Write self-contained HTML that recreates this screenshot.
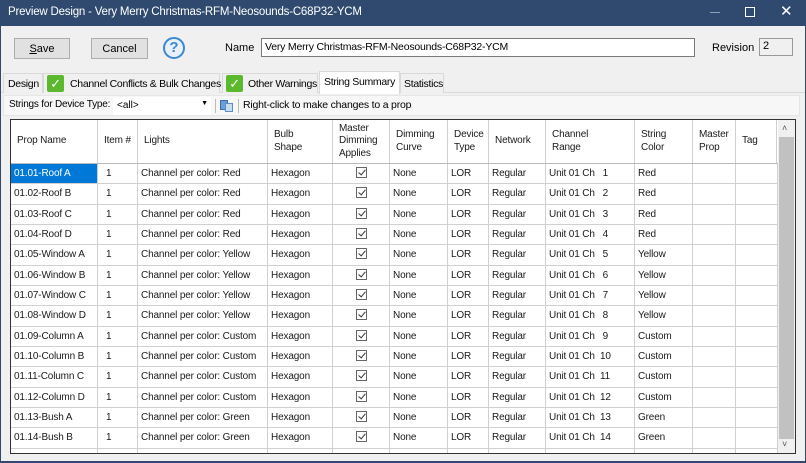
<!DOCTYPE html>
<html><head><meta charset="utf-8"><style>
*{box-sizing:border-box;margin:0;padding:0}
body{width:806px;height:463px;overflow:hidden;background:#2f4a6e;font-family:"Liberation Sans",sans-serif;font-size:11px;color:#000;position:relative}
.a{position:absolute;white-space:nowrap}
#win{left:1px;top:26px;width:804px;height:435px;background:#f0f0f0}
.btn{background:#e1e1e1;border:1px solid #adadad;text-align:center;line-height:20px;font-size:11px}
.tab{top:73px;height:20px;line-height:20px;font-size:10.5px;letter-spacing:-0.3px;padding-left:4px;border:1px solid #d9d9d9;border-bottom:none;background:#f0f0f0}
.chk{width:17px;height:17px;background:#5cb82c;border-radius:2px;color:#fff;font-size:13px;text-align:center;line-height:17px}
#grid{left:10px;top:119px;width:786px;height:335px;background:#fff;border:1px solid #333;overflow:hidden}
.row{position:absolute;left:0;height:21px;width:767px;border-bottom:1px solid #d0d0d0}
.c{position:absolute;top:0;height:100%;border-right:1px solid #d0d0d0;line-height:20px;padding-left:3px;white-space:nowrap;overflow:hidden;font-size:10px;letter-spacing:-0.15px;color:#1a1a1a}
.h .c{line-height:12.5px;display:flex;align-items:center;padding-left:6px;font-size:10px}
.cb{display:inline-block;width:11px;height:11px;border:1px solid #666;margin-left:20px;vertical-align:middle;position:relative;top:-1px}
.cb:after{content:"";position:absolute;left:3px;top:0;width:3px;height:6px;border:solid #333;border-width:0 1px 1px 0;transform:rotate(40deg)}
</style></head><body>
<div class="a" style="left:8px;top:6px;color:#fff;font-size:11.5px;letter-spacing:-0.2px">Preview Design - Very Merry Christmas-RFM-Neosounds-C68P32-YCM</div>
<div class="a" style="left:710px;top:12px;width:10px;height:1px;background:#8fa0b8"></div>
<div class="a" style="left:745px;top:7px;width:10px;height:10px;border:1px solid #fff"></div>
<div class="a" style="left:780px;top:2px;color:#fff;font-size:15px">✕</div>
<div class="a" id="win"></div>
<div class="a btn" style="left:14px;top:38px;width:56px;height:21px"><u>S</u>ave</div>
<div class="a btn" style="left:91px;top:38px;width:57px;height:21px">Cancel</div>
<div class="a" style="left:163px;top:37px;width:22px;height:22px;border:2px solid #3d88d0;border-radius:50%;background:#e8f1fb;color:#3d88d0;text-align:center;font-size:15px;font-weight:bold;line-height:18px">?</div>
<div class="a" style="left:225px;top:42px;font-size:11px">Name</div>
<div class="a" style="left:261px;top:38px;width:434px;height:19px;background:#fff;border:1px solid #7a7a7a;padding:2px 3px;font-size:10.5px;letter-spacing:-0.2px">Very Merry Christmas-RFM-Neosounds-C68P32-YCM</div>
<div class="a" style="left:712px;top:42px;font-size:11px">Revision</div>
<div class="a" style="left:759px;top:38px;width:34px;height:18px;background:#f0f0f0;border:1px solid #999;padding:1px 3px">2</div>
<div class="a" style="left:1px;top:92px;width:804px;height:1px;background:#d9d9d9"></div>
<div class="a tab" style="left:3px;width:40px">Design</div>
<div class="a tab" style="left:43px;width:177px;padding-left:3px"><span class="a chk" style="left:3px;top:1px">✓</span><span style="margin-left:23px">Channel Conflicts &amp; Bulk Changes</span></div>
<div class="a tab" style="left:222px;width:96px;padding-left:3px"><span class="a chk" style="left:3px;top:1px">✓</span><span style="margin-left:22px">Other Warnings</span></div>
<div class="a tab" style="left:319px;top:71px;height:23px;width:81px;background:#fff;line-height:21px">String Summary</div>
<div class="a tab" style="left:400px;width:44px;padding-left:3px">Statistics</div>
<div class="a" style="left:3px;top:95px;width:797px;height:21px;background:#f7f7f7;border:1px solid #e6e6e6"></div>
<div class="a" style="left:9px;top:99px;font-size:10px;letter-spacing:-0.2px">Strings for Device Type:</div>
<div class="a" style="left:113px;top:97px;width:98px;height:18px;background:#fff;padding:3px 4px;font-size:10px">&lt;all&gt;<span class="a" style="right:3px;top:3px;font-size:7px">▼</span></div>
<div class="a" style="left:215px;top:99px;width:1px;height:14px;background:#bbb"></div>
<div class="a" style="left:220px;top:100px;width:8px;height:10px;background:#6b9fd6;border:1px solid #3b6ea8"></div>
<div class="a" style="left:225px;top:103px;width:8px;height:9px;background:#c8dcf0;border:1px solid #5b8ec8"></div>
<div class="a" style="left:238px;top:99px;width:1px;height:14px;background:#bbb"></div>
<div class="a" style="left:243px;top:99px;font-size:10.5px;letter-spacing:-0.2px">Right-click to make changes to a prop</div>
<div class="a" id="grid">
<div class="row h" style="top:0;height:44px;border-bottom:1px solid #bbb">
<div class="c" style="left:0;width:87px">Prop Name</div>
<div class="c" style="left:87px;width:40px">Item #</div>
<div class="c" style="left:127px;width:130px">Lights</div>
<div class="c" style="left:257px;width:65px">Bulb<br>Shape</div>
<div class="c" style="left:322px;width:57px">Master<br>Dimming<br>Applies</div>
<div class="c" style="left:379px;width:58px">Dimming<br>Curve</div>
<div class="c" style="left:437px;width:41px">Device<br>Type</div>
<div class="c" style="left:478px;width:57px">Network</div>
<div class="c" style="left:535px;width:89px">Channel<br>Range</div>
<div class="c" style="left:624px;width:58px">String<br>Color</div>
<div class="c" style="left:682px;width:43px">Master<br>Prop</div>
<div class="c" style="left:725px;width:41px">Tag</div>
</div>
<div id="rows"></div>
<div class="a" style="left:767px;top:0;width:17px;height:333px;background:#f0f0f0"></div>
<div class="a" style="left:771px;top:3px;font-size:9px;color:#555">˄</div>
<div class="a" style="left:768px;top:17px;width:15px;height:302px;background:#c1c1c1"></div>
<div class="a" style="left:771px;top:319px;font-size:9px;color:#555">˅</div>
</div>
<script>
var d=[["01.01-Roof A","Red",1],["01.02-Roof B","Red",2],["01.03-Roof C","Red",3],["01.04-Roof D","Red",4],["01.05-Window A","Yellow",5],["01.06-Window B","Yellow",6],["01.07-Window C","Yellow",7],["01.08-Window D","Yellow",8],["01.09-Column A","Custom",9],["01.10-Column B","Custom",10],["01.11-Column C","Custom",11],["01.12-Column D","Custom",12],["01.13-Bush A","Green",13],["01.14-Bush B","Green",14],["","",0]];
var tops=[44,64,85,105,125,146,166,186,207,227,247,268,288,308,329];
var h="";
d.forEach(function(r,i){
var sel=i==0?"background:#0078d7;color:#fff;":"";
var e=r[0]==="";
h+='<div class="row" style="top:'+tops[i]+'px;height:'+(i<14?(tops[i+1]-tops[i]):21)+'px">'+
'<div class="c" style="left:0;width:87px;'+sel+'">'+r[0]+'</div>'+
'<div class="c" style="left:87px;width:40px;padding-left:8px">'+(e?'':'1')+'</div>'+
'<div class="c" style="left:127px;width:130px">'+(e?'':'Channel per color: '+r[1])+'</div>'+
'<div class="c" style="left:257px;width:65px">'+(e?'':'Hexagon')+'</div>'+
'<div class="c" style="left:322px;width:57px">'+(e?'':'<span class="cb"></span>')+'</div>'+
'<div class="c" style="left:379px;width:58px">'+(e?'':'None')+'</div>'+
'<div class="c" style="left:437px;width:41px">'+(e?'':'LOR')+'</div>'+
'<div class="c" style="left:478px;width:57px">'+(e?'':'Regular')+'</div>'+
'<div class="c" style="left:535px;width:89px">'+(e?'':'Unit 01 Ch&nbsp; '+(r[2]<10?'&nbsp;':'')+r[2])+'</div>'+
'<div class="c" style="left:624px;width:58px">'+r[1]+'</div>'+
'<div class="c" style="left:682px;width:43px"></div>'+
'<div class="c" style="left:725px;width:42px"></div></div>';});
document.getElementById('rows').innerHTML=h;
</script>
</body></html>
